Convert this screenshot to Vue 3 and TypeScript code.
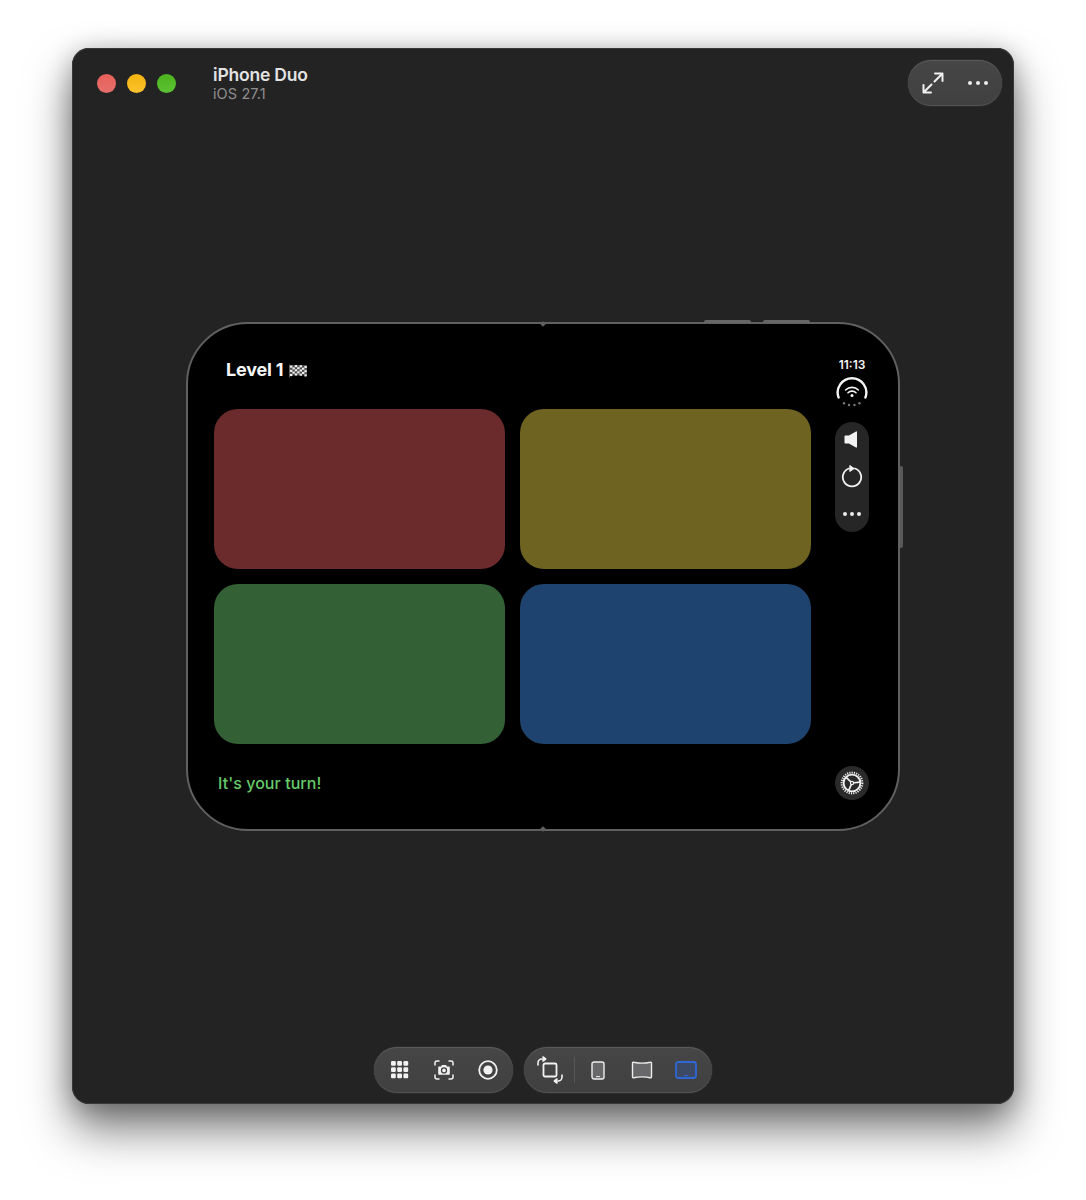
<script setup lang="ts">
const cards: string[] = ['red', 'olive', 'green', 'blue']
const flagCells: { x: number; y: number }[] = []
for (let r = 0; r < 5; r++) {
  for (let c = 0; c < 7; c++) {
    if ((r + c) % 2 === 0) flagCells.push({ x: 2 + c * 2.4, y: 1.2 + r * 2.1 - Math.sin(c / 1.6) * 0.6 })
  }
}
const gridDots: { x: number; y: number }[] = []
for (let r = 0; r < 3; r++) for (let c = 0; c < 3; c++) gridDots.push({ x: 1 + c * 6.2, y: 1 + r * 6.2 })
</script>

<template>
  <div class="page">
    <div class="window">
      <header class="titlebar">
        <div class="lights">
          <span class="light light-red"></span>
          <span class="light light-yellow"></span>
          <span class="light light-green"></span>
        </div>
        <div class="titles">
          <div class="title">iPhone Duo</div>
          <div class="subtitle">iOS 27.1</div>
        </div>
        <div class="pill top-pill">
          <svg class="expand" width="24" height="24" viewBox="0 0 24 24" fill="none" stroke="#f0f0f0" stroke-width="2" stroke-linecap="round" stroke-linejoin="round">
            <path d="M14 2.5h7.5V10M21.5 2.5L13.5 10.5M10 21.5H2.5V14M2.5 21.5l8-8" />
          </svg>
          <div class="dots"><i></i><i></i><i></i></div>
        </div>
      </header>

      <section class="device">
        <span class="btn-top btn-top-a"></span>
        <span class="btn-top btn-top-b"></span>
        <span class="btn-side"></span>
        <span class="hinge hinge-top"></span>
        <span class="hinge hinge-bottom"></span>

        <div class="game">
          <div class="game-head">
            <span class="level">Level 1</span>
            <svg class="flag" width="20" height="14" viewBox="0 0 20 14">
              <rect x="1" y="0.5" width="0.8" height="13" fill="#777" />
              <rect x="2" y="1" width="17" height="10.4" fill="#4e4e4e" />
              <rect v-for="(cell, i) in flagCells" :key="i" :x="cell.x" :y="cell.y + 0.4" width="2.4" height="2.1" fill="#eeeeee" />
            </svg>
          </div>
          <div class="cards">
            <div v-for="card in cards" :key="card" class="card" :class="'card-' + card"></div>
          </div>
          <div class="turn">It's your turn!</div>
        </div>

        <aside class="side">
          <div class="time">11:13</div>
          <svg class="wifi" width="34" height="30" viewBox="0 0 34 30" fill="none">
            <path d="M3.6 20.5A14.3 14.3 0 1 1 30.4 20.5" stroke="#f4f4f4" stroke-width="2.4" stroke-linecap="round" />
            <path d="M10.6 13a9 9 0 0 1 12.8 0M13 15.8a5.6 5.6 0 0 1 8 0" stroke="#f4f4f4" stroke-width="1.6" stroke-linecap="round" />
            <circle cx="17" cy="18.6" r="1.5" fill="#f4f4f4" />
            <circle cx="9" cy="26.2" r="1.2" fill="#7a7a7a" />
            <circle cx="14" cy="28" r="1.2" fill="#7a7a7a" />
            <circle cx="19.5" cy="28" r="1.2" fill="#7a7a7a" />
            <circle cx="24.5" cy="26.2" r="1.2" fill="#7a7a7a" />
          </svg>
          <div class="controls">
            <div class="control">
              <svg class="speaker" width="14" height="17" viewBox="0 0 14 17"><path d="M1.5 4.6h3.4L12 .4c.5-.3 1-.1 1 .5v15.2c0 .6-.5.8-1 .5l-7.1-4.2H1.5c-.6 0-1-.4-1-1V5.6c0-.6.4-1 1-1z" fill="#f2f2f2" /></svg>
            </div>
            <div class="control">
              <svg width="22" height="24" viewBox="0 0 22 24" fill="none" stroke="#f2f2f2" stroke-width="1.8" stroke-linecap="round" stroke-linejoin="round">
                <path d="M8 3.5A9.2 9.2 0 1 0 14 3.5" />
                <path d="M9 .6l4.4 3L9 6.4z" fill="#f2f2f2" stroke-width="0.8" />
              </svg>
            </div>
            <div class="control">
              <div class="dots dots-small"><i></i><i></i><i></i></div>
            </div>
          </div>
          <div class="gear-wrap">
            <svg width="24" height="24" viewBox="0 0 24 24" fill="none" stroke="#f0f0f0">
              <circle cx="12" cy="12" r="10.4" stroke-width="2" stroke-dasharray="1.2 1.1" />
              <circle cx="12" cy="12" r="8.4" stroke-width="1.9" />
              <path d="M12 12l8-.8M12 12L6.2 6.4M12 12l-3.4 7.6" stroke-width="1.7" />
              <circle cx="12" cy="12" r="1.6" fill="#2a2a2b" stroke-width="1.2" />
            </svg>
          </div>
        </aside>
      </section>

      <footer class="toolbar">
        <div class="pill tool-pill tool-pill-first">
          <div class="tool">
            <svg width="18" height="18" viewBox="0 0 18 18">
              <rect v-for="(d, i) in gridDots" :key="i" :x="d.x - 1" :y="d.y - 1" width="4.8" height="4.8" rx="1.3" fill="#f2f2f2" />
            </svg>
          </div>
          <div class="tool">
            <svg width="20" height="20" viewBox="0 0 20 20" fill="none" stroke="#f2f2f2" stroke-width="1.5" stroke-linecap="round">
              <path d="M1 5V3a2 2 0 0 1 2-2h2M15 1h2a2 2 0 0 1 2 2v2M19 15v2a2 2 0 0 1-2 2h-2M5 19H3a2 2 0 0 1-2-2v-2" />
              <path d="M4.2 7.4c0-.6.4-1 1-1h1.9l.9-1.3h4l.9 1.3h1.9c.6 0 1 .4 1 1v6.4c0 .6-.4 1-1 1H5.2c-.6 0-1-.4-1-1z" fill="#f2f2f2" stroke="none" />
              <circle cx="10" cy="10.4" r="2.5" stroke="#3f3f40" stroke-width="1.3" />
            </svg>
          </div>
          <div class="tool">
            <svg width="20" height="20" viewBox="0 0 20 20" fill="none">
              <circle cx="10" cy="10" r="8.8" stroke="#f2f2f2" stroke-width="1.8" />
              <circle cx="10" cy="10" r="4.6" fill="#f2f2f2" />
            </svg>
          </div>
        </div>
        <div class="pill tool-pill">
          <div class="tool">
            <svg width="28" height="28" viewBox="0 0 28 28" fill="none" stroke="#f2f2f2" stroke-width="1.6" stroke-linecap="round" stroke-linejoin="round">
              <rect x="7.5" y="7.5" width="13" height="13" rx="1.5" stroke-width="1.8" />
              <path d="M2 9V7a4 4 0 0 1 4-4h3" />
              <path d="M7 1l2.6 2L7 5" fill="#f2f2f2" />
              <path d="M26 19v2a4 4 0 0 1-4 4h-3" />
              <path d="M21 27l-2.6-2L21 23" fill="#f2f2f2" />
            </svg>
          </div>
          <span class="divider"></span>
          <div class="tool">
            <svg width="14" height="19" viewBox="0 0 14 19" fill="none" stroke="#eeeeee" stroke-width="1.4">
              <rect x="1" y="1" width="12" height="17" rx="2" fill="#68686a" />
              <path d="M5 15.6h4" stroke-width="1" />
            </svg>
          </div>
          <div class="tool">
            <svg width="22" height="18" viewBox="0 0 22 18" fill="none" stroke="#eeeeee" stroke-width="1.4" stroke-linejoin="round">
              <path d="M1.5 2.2c0-.8.6-1.2 1.3-1C8 2.4 14 2.4 19.2 1.2c.7-.2 1.3.2 1.3 1v13.6c0 .8-.6 1.2-1.3 1C14 15.6 8 15.6 2.8 16.8c-.7.2-1.3-.2-1.3-1z" fill="#68686a" />
            </svg>
          </div>
          <div class="tool">
            <svg width="22" height="18" viewBox="0 0 22 18" fill="none" stroke="#2f68d6" stroke-width="1.8">
              <rect x="1" y="1" width="20" height="16" rx="2.2" fill="#3c4a66" />
              <path d="M9 14.6h4" stroke-width="1" />
            </svg>
          </div>
        </div>
      </footer>
    </div>
  </div>
</template>

<style scoped>
.page {
  box-sizing: border-box;
  height: 1200px;
  padding: 48px 72px 0;
  overflow: hidden;
  background: #fff;
}
.window {
  box-sizing: border-box;
  width: 942px;
  height: 1056px;
  padding-top: 12px;
  display: flex;
  flex-direction: column;
  align-items: center;
  background: #242324;
  border-radius: 17px;
  box-shadow:
    inset 0 0 0 1px #383839,
    0 26px 46px rgba(0, 0, 0, 0.5),
    0 4px 26px rgba(0, 0, 0, 0.28);
  font-family: Inter, "Liberation Sans", sans-serif;
}
.titlebar {
  align-self: stretch;
  height: 46px;
  padding: 0 12px 0 25px;
  display: flex;
  align-items: center;
}
.lights {
  display: flex;
  gap: 11px;
}
.light {
  width: 19px;
  height: 19px;
  border-radius: 50%;
}
.light-red { background: linear-gradient(#e8605a, #e66f6b); }
.light-yellow { background: linear-gradient(#f4b30f, #fcc32c); }
.light-green { background: linear-gradient(#4db41f, #5cc233); }
.titles {
  margin-left: 37px;
  padding-top: 2px;
}
.title {
  font-size: 17.5px;
  line-height: 20px;
  font-weight: 600;
  letter-spacing: -0.2px;
  color: #e3e3e3;
}
.subtitle {
  font-size: 14.5px;
  line-height: 18px;
  letter-spacing: 0.1px;
  color: #8f8f8f;
}
.pill {
  display: flex;
  align-items: center;
  height: 46px;
  box-sizing: border-box;
  border-radius: 23px;
  background: linear-gradient(#464647, #404041);
  box-shadow: inset 0 1px 0 #5a5a5b, inset 0 -1px 0 #525253, 0 0 0 1px #2c2c2d;
}
.top-pill {
  margin-left: auto;
  width: 94px;
  padding: 0 14px 0 13px;
  justify-content: space-between;
}
.dots {
  display: flex;
  gap: 4px;
}
.dots i {
  width: 4px;
  height: 4px;
  border-radius: 50%;
  background: #ececec;
}
.dots-small {
  gap: 3px;
}
.device {
  position: relative;
  flex: none;
  box-sizing: border-box;
  width: 714px;
  height: 509px;
  margin-top: 216px;
  padding: 0 29px 0 26px;
  display: flex;
  background: #000;
  border: 2px solid #606061;
  border-radius: 62px;
}
.btn-top {
  position: absolute;
  top: -4px;
  width: 47px;
  height: 3px;
  background: #666667;
  border-radius: 2px 2px 0 0;
}
.btn-top-a { left: 516px; }
.btn-top-b { left: 575px; }
.btn-side {
  position: absolute;
  top: 142px;
  right: -5px;
  width: 3px;
  height: 82px;
  background: #59595a;
  border-radius: 0 2px 2px 0;
}
.hinge {
  position: absolute;
  left: 353px;
  width: 4px;
  height: 4px;
  background: #606061;
  transform: rotate(45deg);
}
.hinge-top { top: -2px; }
.hinge-bottom { bottom: -2px; }
.game {
  width: 597px;
  display: flex;
  flex-direction: column;
}
.game-head {
  height: 85px;
  box-sizing: border-box;
  padding: 34px 0 0 12px;
  display: flex;
  align-items: flex-start;
  gap: 5px;
}
.level {
  font-size: 18px;
  line-height: 24px;
  font-weight: 700;
  letter-spacing: -0.2px;
  color: #f6f6f6;
}
.flag {
  margin-top: 6px;
}
.cards {
  display: grid;
  grid-template-columns: 291px 291px;
  grid-template-rows: 160px 160px;
  gap: 15px;
}
.card {
  border-radius: 24px;
}
.card-red { background: #6b2a2b; }
.card-olive { background: #6f6322; }
.card-green { background: #336034; }
.card-blue { background: #1f436f; }
.turn {
  padding: 27px 0 0 4px;
  font-size: 16px;
  line-height: 24px;
  font-weight: 500;
  letter-spacing: 0.06px;
  color: #66cb6a;
}
.side {
  width: 34px;
  margin-left: 24px;
  display: flex;
  flex-direction: column;
  align-items: center;
  padding: 34px 0 29px;
  box-sizing: border-box;
}
.time {
  font-size: 12px;
  line-height: 14px;
  font-weight: 600;
  color: #f4f4f4;
  white-space: nowrap;
}
.wifi {
  margin-top: 5px;
  flex: none;
}
.controls {
  margin-top: 15px;
  width: 34px;
  height: 110px;
  border-radius: 17px;
  background: #262627;
  display: flex;
  flex-direction: column;
}
.control {
  flex: 1;
  display: flex;
  align-items: center;
  justify-content: center;
}
.speaker {
  margin: 0 2px 1px 0;
}
.gear-wrap {
  margin-top: auto;
  width: 34px;
  height: 34px;
  border-radius: 50%;
  background: #2a2a2b;
  display: flex;
  align-items: center;
  justify-content: center;
}
.toolbar {
  margin-top: 216px;
  display: flex;
  gap: 11px;
}
.tool-pill {
  padding: 0 4px;
}
.tool-pill-first {
  padding-right: 3px;
}
.tool {
  width: 44px;
  height: 46px;
  display: flex;
  align-items: center;
  justify-content: center;
}
.divider {
  width: 1px;
  height: 26px;
  margin: 0 1.5px;
  background: #565657;
}
</style>

<style>
html, body {
  background: #fff;
}
</style>
